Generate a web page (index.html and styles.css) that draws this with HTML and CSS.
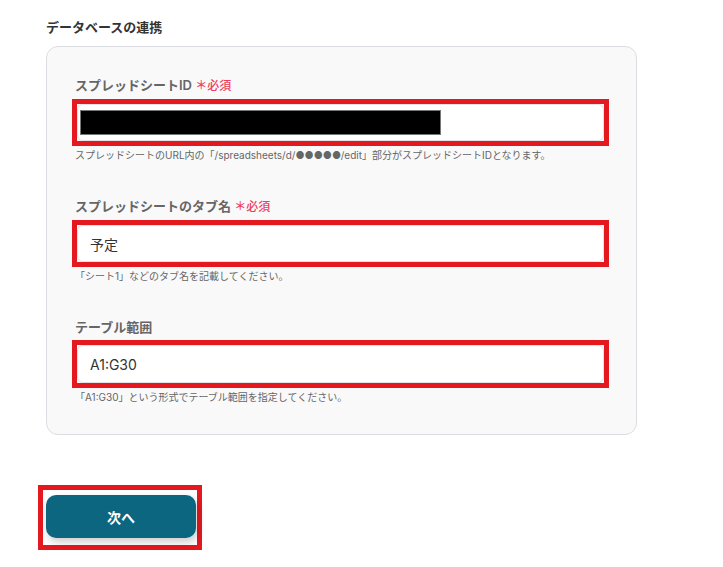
FILE: index.html
```html
<!DOCTYPE html>
<html lang="ja">
<head>
    <meta charset="UTF-8">
    <meta name="viewport" content="width=device-width, initial-scale=1.0">
    <title>データベースの連携</title>
    <link rel="stylesheet" href="styles.css">
</head>
<body>
    <div class="page">
        <h2 class="section-title">データベースの連携</h2>

        <div class="card">
            <div class="field">
                <label class="field-label">スプレッドシートID <span class="required">＊必須</span></label>
                <div class="highlight">
                    <div class="input-box">
                        <span class="redacted"></span>
                    </div>
                </div>
                <p class="hint">スプレッドシートのURL内の「/spreadsheets/d/●●●●●/edit」部分がスプレッドシートIDとなります。</p>
            </div>

            <div class="field">
                <label class="field-label">スプレッドシートのタブ名 <span class="required">＊必須</span></label>
                <div class="highlight">
                    <div class="input-box">予定</div>
                </div>
                <p class="hint">「シート1」などのタブ名を記載してください。</p>
            </div>

            <div class="field">
                <label class="field-label">テーブル範囲</label>
                <div class="highlight tall">
                    <div class="input-box">A1:G30</div>
                </div>
                <p class="hint">「A1:G30」という形式でテーブル範囲を指定してください。</p>
            </div>
        </div>

        <div class="button-highlight">
            <button class="next-btn" type="button">次へ</button>
        </div>
    </div>
</body>
</html>
```

FILE: styles.css
```css
:root {
    --text-color: #333;
    --label-color: #666;
    --hint-color: #666;
    --mark-color: #e3191f;
    --required-color: #ee3f5a;
    --button-color: #0c6680;
}

* {
    box-sizing: border-box;
    margin: 0;
    padding: 0;
}

body {
    font-family: Inter, "Noto Sans CJK JP", sans-serif;
    background-color: #fff;
    color: var(--text-color);
}

.page {
    padding: 18px 0 0 46px;
}

.section-title {
    font-size: 13px;
    font-weight: bold;
    line-height: 18px;
    margin-bottom: 10px;
}

.card {
    width: 591px;
    background-color: #f9f9fa;
    border: 1px solid #dcdde3;
    border-radius: 12px;
    padding: 29px 27px 30px 25px;
}

.field + .field {
    margin-top: 35px;
}

.field-label {
    display: block;
    font-size: 13px;
    font-weight: 600;
    line-height: 18px;
    color: var(--label-color);
    padding-left: 3px;
    margin-bottom: 4px;
}

.required {
    color: var(--required-color);
    font-size: 12px;
    font-weight: 500;
}

.highlight {
    border: 5px solid var(--mark-color);
    height: 47px;
}

.highlight.tall {
    height: 48px;
}

.input-box {
    height: 100%;
    background-color: #fff;
    border: 1px solid #e2e2e6;
    border-radius: 6px;
    padding: 0 12px;
    display: flex;
    align-items: center;
    font-size: 14px;
    color: var(--text-color);
}

.redacted {
    display: block;
    width: 361px;
    height: 25px;
    margin-left: -10px;
    background-color: #000;
    border: 1px solid #777;
}

.hint {
    font-size: 10px;
    line-height: 14px;
    color: var(--hint-color);
    padding-left: 3px;
    margin-top: 2px;
}

.button-highlight {
    display: inline-block;
    margin: 50px 0 0 -8px;
    border: 5px solid var(--mark-color);
    padding: 5px 1px 7px 3px;
}

.next-btn {
    display: block;
    width: 150px;
    height: 43px;
    background-color: var(--button-color);
    color: #fff;
    border: none;
    border-radius: 10px;
    font-family: inherit;
    font-size: 14px;
    font-weight: bold;
    box-shadow: 2px 4px 8px rgba(0, 0, 0, 0.2);
    cursor: pointer;
}
```
